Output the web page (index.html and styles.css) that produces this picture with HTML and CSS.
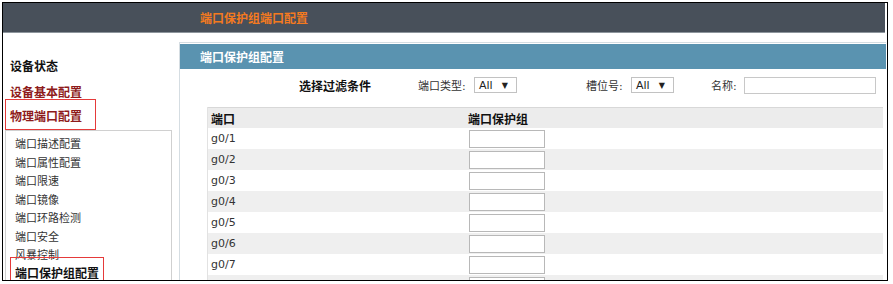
FILE: index.html
```html
<!DOCTYPE html>
<html lang="zh-CN">
<head>
    <meta charset="UTF-8">
    <meta name="viewport" content="width=device-width, initial-scale=1.0">
    <title>端口保护组端口配置</title>
    <link rel="stylesheet" href="styles.css">
</head>
<body>
    <div class="frame">
        <div class="top-bar">端口保护组端口配置</div>

        <div class="content">
            <div class="sidebar">
                <div class="nav-item nav-status">设备状态</div>
                <div class="nav-item nav-red nav-second">设备基本配置</div>
                <div class="nav-item nav-red nav-current">物理端口配置</div>
                <div class="sub-menu">
                    <div class="sub-item">端口描述配置</div>
                    <div class="sub-item">端口属性配置</div>
                    <div class="sub-item">端口限速</div>
                    <div class="sub-item">端口镜像</div>
                    <div class="sub-item">端口环路检测</div>
                    <div class="sub-item">端口安全</div>
                    <div class="sub-item">风暴控制</div>
                    <div class="sub-item sub-active">端口保护组配置</div>
                </div>
            </div>

            <div class="main">
                <div class="panel">
                    <div class="panel-title">端口保护组配置</div>

                    <div class="filter-row">
                        <span class="filter-title">选择过滤条件</span>
                        <span class="filter-label label-type">端口类型:</span>
                        <span class="select-box">All <span class="arrow">▼</span></span>
                        <span class="filter-label label-slot">槽位号:</span>
                        <span class="select-box">All <span class="arrow">▼</span></span>
                        <span class="filter-label label-name">名称:</span>
                        <input type="text" class="name-input">
                    </div>

                    <table class="port-table">
                        <tr class="head-row">
                            <th class="col-port">端口</th>
                            <th>端口保护组</th>
                        </tr>
                        <tr><td class="col-port">g0/1</td><td><input type="text" class="cell-input"></td></tr>
                        <tr class="alt"><td class="col-port">g0/2</td><td><input type="text" class="cell-input"></td></tr>
                        <tr><td class="col-port">g0/3</td><td><input type="text" class="cell-input"></td></tr>
                        <tr class="alt"><td class="col-port">g0/4</td><td><input type="text" class="cell-input"></td></tr>
                        <tr><td class="col-port">g0/5</td><td><input type="text" class="cell-input"></td></tr>
                        <tr class="alt"><td class="col-port">g0/6</td><td><input type="text" class="cell-input"></td></tr>
                        <tr><td class="col-port">g0/7</td><td><input type="text" class="cell-input"></td></tr>
                        <tr class="alt"><td class="col-port"></td><td><input type="text" class="cell-input"></td></tr>
                    </table>
                </div>
            </div>
        </div>
    </div>
</body>
</html>
```

FILE: styles.css
```css
body {
    margin: 0;
    padding: 2px 0 0 2px;
    background: #fff;
    font-family: "DejaVu Sans", "Noto Sans CJK SC", sans-serif;
    font-size: 11px;
    color: #333;
}

.frame {
    width: 884px;
    height: 277px;
    border: 1px solid #000;
    overflow: hidden;
    background: #fff;
}

.top-bar {
    height: 29px;
    line-height: 29px;
    margin-right: 2px;
    padding-left: 197px;
    background: #48505a;
    border-bottom: 1px solid #8d959c;
    color: #f47a1f;
    font-family: "Noto Sans CJK SC", sans-serif;
    font-size: 12px;
    font-weight: bold;
}

.content {
    display: flex;
}

/* left navigation */
.sidebar {
    width: 176px;
    flex-shrink: 0;
    padding-top: 26px;
    font-family: "Noto Sans CJK SC", sans-serif;
}

.nav-item {
    padding-left: 7px;
    font-size: 12px;
    font-weight: bold;
    line-height: 14px;
}

.nav-status {
    color: #111;
}

.nav-red {
    color: #8e1b1b;
}

.nav-second {
    margin-top: 12px;
}

.nav-current {
    width: 77px;
    margin-left: 2px;
    padding: 9px 8px 6px 4px;
    border: 1px solid #e53a3a;
}

.sub-menu {
    width: 156px;
    margin-left: 2px;
    padding: 3px 0 0 9px;
    border: 1px solid #d0d0d0;
    border-bottom: none;
    height: 160px;
}

.sub-item {
    font-size: 11px;
    line-height: 18.5px;
    color: #333;
}

.sub-active {
    position: relative;
    font-size: 12px;
    font-weight: bold;
    color: #111;
}

.sub-active::after {
    content: "";
    position: absolute;
    top: -7px;
    left: -5px;
    width: 92px;
    height: 40px;
    border: 1px solid #e53a3a;
}

/* main panel */
.main {
    flex: 1;
    padding-top: 9px;
    padding-right: 1px;
}

.panel {
    height: 260px;
    border-top: 1px solid #d5dde2;
    border-left: 1px solid #d5dde2;
}

.panel-title {
    margin-top: 1px;
    height: 25px;
    line-height: 25px;
    padding-left: 20px;
    background: #5a93b0;
    color: #fff;
    font-family: "Noto Sans CJK SC", sans-serif;
    font-size: 12px;
    font-weight: bold;
}

.filter-row {
    display: flex;
    align-items: center;
    height: 16px;
    margin-top: 8px;
    padding-left: 119px;
}

.filter-title {
    font-family: "Noto Sans CJK SC", sans-serif;
    font-size: 12px;
    font-weight: bold;
    color: #111;
}

.filter-label {
    font-size: 11px;
    color: #333;
}

.label-type {
    margin-left: 47px;
    width: 56px;
}

.label-slot {
    margin-left: 69px;
    width: 45px;
}

.label-name {
    margin-left: 37px;
    width: 33px;
}

.select-box {
    display: inline-flex;
    align-items: center;
    box-sizing: border-box;
    width: 43px;
    height: 16px;
    padding-left: 4px;
    border: 1px solid #c2c2c2;
    font-size: 11px;
    color: #222;
}

.select-box .arrow {
    margin-left: 9px;
    font-size: 8px;
}

.name-input {
    box-sizing: border-box;
    width: 132px;
    height: 17px;
    margin: 0;
    border: 1px solid #c8c8c8;
}

.port-table {
    width: 676px;
    margin: 14px 0 0 27px;
    border-collapse: separate;
    border-spacing: 0;
    border-left: 1px solid #e2e2e2;
}

.port-table th {
    height: 20px;
    padding: 0;
    text-align: left;
    background: #ececec;
    border-top: 1px solid #d8d8d8;
    font-family: "Noto Sans CJK SC", sans-serif;
    font-size: 12px;
    font-weight: bold;
    color: #111;
}

.port-table td {
    height: 21px;
    padding: 0;
    font-size: 11px;
    color: #333;
}

.port-table .col-port {
    width: 257px;
    padding-left: 3px;
}

.port-table tr.alt td {
    background: #efefef;
}

.cell-input {
    display: block;
    box-sizing: border-box;
    width: 76px;
    height: 18px;
    margin: 1px 0 0 1px;
    border: 1px solid #b8b8b8;
    background: #fff;
}
```
